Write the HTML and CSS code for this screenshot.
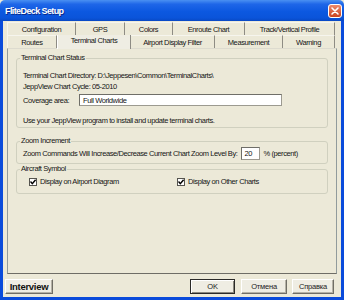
FILE: index.html
```html
<!DOCTYPE html>
<html>
  <head>
    <meta charset="UTF-8">
    <title>FliteDeck Setup</title>
    <link rel="stylesheet" href="styles.css">
  </head>
  <body>
    <div class="window">
      <div class="titlebar">
        <span class="title">FliteDeck Setup</span>
        <span class="close-btn">
          <svg width="14" height="14" viewBox="0 0 14 14">
            <defs>
              <linearGradient id="cg" x1="0" y1="0" x2="0" y2="1">
                <stop offset="0" stop-color="#EE8D70"/>
                <stop offset="1" stop-color="#C8411C"/>
              </linearGradient>
            </defs>
            <rect x="0.5" y="0.5" width="13" height="13" rx="2.5" fill="url(#cg)" stroke="#fff"/>
            <path d="M4 4 L10 10 M10 4 L4 10" stroke="#fff" stroke-width="1.6" stroke-linecap="round"/>
          </svg>
        </span>
      </div>
      <div class="client">
        <!-- tab strip: back row + front row -->
        <div class="tabs">
          <div class="tab-row">
            <div class="tab t-config">Configuration</div>
            <div class="tab t-gps">GPS</div>
            <div class="tab t-colors">Colors</div>
            <div class="tab t-enroute">Enroute Chart</div>
            <div class="tab t-track">Track/Vertical Profile</div>
          </div>
          <div class="tab-row front">
            <div class="tab t-routes">Routes</div>
            <div class="tab t-terminal selected">Terminal Charts</div>
            <div class="tab t-airport">Airport Display Filter</div>
            <div class="tab t-measure">Measurement</div>
            <div class="tab t-warning">Warning</div>
          </div>
        </div>

        <div class="panel">
          <fieldset class="group g-status">
            <legend>Terminal Chart Status</legend>
            <div class="line">Terminal Chart Directory: D:\Jeppesen\Common\TerminalCharts\</div>
            <div class="line">JeppView Chart Cycle: 05-2010</div>
            <div class="field-row">
              <span class="field-label">Coverage area:</span>
              <span class="textbox coverage">Full Worldwide</span>
            </div>
            <div class="line note">Use your JeppView program to install and update terminal charts.</div>
          </fieldset>

          <fieldset class="group g-zoom">
            <legend>Zoom Increment</legend>
            <div class="field-row">
              <span>Zoom Commands Will Increase/Decrease Current Chart Zoom Level By:</span>
              <span class="textbox zoom-value">20</span>
              <span class="unit">% (percent)</span>
            </div>
          </fieldset>

          <fieldset class="group g-aircraft">
            <legend>Aircraft Symbol</legend>
            <div class="check-row">
              <label class="check first">
                <span class="box"><svg width="6" height="6" viewBox="0 0 6 6"><path d="M0.5 2.5 L2.3 4.6 L5.6 0.8" fill="none" stroke="#000" stroke-width="1.4"/></svg></span>
                Display on Airport Diagram
              </label>
              <label class="check">
                <span class="box"><svg width="6" height="6" viewBox="0 0 6 6"><path d="M0.5 2.5 L2.3 4.6 L5.6 0.8" fill="none" stroke="#000" stroke-width="1.4"/></svg></span>
                Display on Other Charts
              </label>
            </div>
          </fieldset>
        </div>

        <div class="button-row">
          <button class="btn interview">Interview</button>
          <div class="spacer"></div>
          <button class="btn default ok">OK</button>
          <button class="btn cancel">Отмена</button>
          <button class="btn help">Справка</button>
        </div>
      </div>
    </div>
  </body>
</html>
```

FILE: styles.css
```css
/* XP style dialog */
body {
  margin: 0;
  background: #ECE9D8;
  font-family: "Liberation Sans", Arial, sans-serif;
  font-size: 7.5px;
  letter-spacing: -0.4px;
  color: #151515;
}

.window {
  width: 344px;
  height: 300px;
  display: flex;
  flex-direction: column;
}

.titlebar {
  height: 21px;
  display: flex;
  align-items: center;
  justify-content: space-between;
  padding: 0 2px 0 5px;
  background: linear-gradient(#4A90F2 0%, #1E66E8 20%, #0C58E0 55%, #0A54DA 85%, #0848C4 100%);
  border-radius: 5px 5px 0 0;
}

.title {
  color: #fff;
  font-weight: bold;
  font-size: 9px;
  letter-spacing: -0.6px;
  text-shadow: 1px 1px 0 #0A2A8C;
}

.close-btn {
  display: flex;
  margin-top: 1px;
}

.client {
  flex: 1;
  display: flex;
  flex-direction: column;
  padding-top: 1px;
  border: 3px solid #0A4BDB;
  border-top: none;
  background: #ECE9D8;
}

/* tabs */
.tabs {
  margin-left: 4px;
}

.tab-row {
  display: flex;
  height: 13px;
}

.tab-row.front {
  position: relative;
  z-index: 1;
}

.tab {
  box-sizing: border-box;
  display: flex;
  align-items: center;
  justify-content: center;
  border-right: 1px solid #8E8C84;
  border-top: 1px solid #F6F5EE;
  white-space: nowrap;
}

.tab:first-child {
  border-left: 1px solid #F6F5EE;
}

.t-config { width: 69px; }
.t-gps { width: 49px; }
.t-colors { width: 48px; }
.t-enroute { width: 72px; }
.t-track { width: 90px; }

.t-routes { width: 50px; }
.t-terminal { width: 74px; }
.t-airport { width: 84px; }
.t-measure { width: 68px; }
.t-warning { width: 52px; }

.tab.selected {
  height: 14px;
  padding-bottom: 3px;
  background: #EFEDE3;
  border-left: 1px solid #FFFFFF;
  border-top: none;
}

/* tab page */
.panel {
  flex: 1;
  margin: 0 4px;
  padding: 4px 8px 0 8px;
  border: 1px solid #919B9C;
  border-top-color: #DDDBCF;
  border-bottom-color: #6E6D66;
}

.group {
  margin: 0;
  padding: 0 6px;
  border: 1px solid #D0D0BF;
  border-radius: 3px;
}

.group legend {
  margin-left: -3px;
  padding: 0 1px;
  line-height: 10px;
}

.line {
  line-height: 11px;
  white-space: nowrap;
}

.g-status {
  padding-top: 7px;
  padding-bottom: 1px;
}

.g-status .field-row {
  margin-top: 2px;
  height: 12px;
}

.g-status .note {
  margin-top: 9px;
}

.field-row {
  display: flex;
  align-items: center;
  white-space: nowrap;
}

.field-label {
  width: 56px;
}

.textbox {
  box-sizing: border-box;
  display: flex;
  align-items: center;
  background: #fff;
  border: 1px solid #9C9A90;
  border-top-color: #6F6E68;
  border-left-color: #6F6E68;
  padding-left: 3px;
}

.coverage {
  width: 203px;
  height: 12px;
}

.g-zoom {
  margin-top: 8px;
  padding-top: 1px;
  padding-bottom: 3px;
}

.g-zoom .field-row {
  height: 13px;
}

.zoom-value {
  width: 19px;
  height: 13px;
  margin-left: 3px;
}

.unit {
  margin-left: 4px;
}

.g-aircraft {
  padding-top: 1px;
  padding-bottom: 5px;
}

.check-row {
  display: flex;
  height: 13px;
  align-items: center;
  padding-left: 6px;
}

.check {
  display: flex;
  align-items: center;
  white-space: nowrap;
}

.check.first {
  width: 148px;
}

.box {
  box-sizing: border-box;
  width: 8px;
  height: 8px;
  margin-right: 3px;
  display: flex;
  align-items: center;
  justify-content: center;
  background: #fff;
  border: 1px solid #55544F;
}

/* bottom buttons */
.button-row {
  display: flex;
  height: 15px;
  margin-top: 5px;
  margin-bottom: 3px;
  padding: 0 7px 0 2px;
}

.spacer {
  flex: 1;
}

.btn {
  box-sizing: border-box;
  height: 15px;
  padding: 0;
  font-family: inherit;
  font-size: 7.5px;
  letter-spacing: -0.2px;
  color: #222;
  background: #EFEDE3;
  border: 1px solid;
  border-color: #FFFFFF #706E66 #706E66 #FFFFFF;
  box-shadow: inset -1px -1px 0 #B5B2A6;
}

.interview {
  width: 48px;
  font-weight: bold;
  font-size: 9.5px;
  letter-spacing: -0.3px;
  color: #111;
}

.ok {
  width: 45px;
}

.btn.default {
  border: 1px solid #2A2A28;
  box-shadow: inset 1px 1px 0 #FFFFFF, inset -1px -1px 0 #8A887E;
}

.cancel {
  width: 46px;
  margin-left: 6px;
}

.help {
  width: 42px;
  margin-left: 5px;
}
```
